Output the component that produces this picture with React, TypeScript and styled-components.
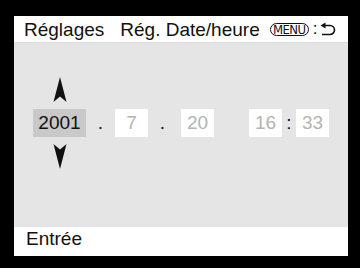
import React from 'react';
import styled, { createGlobalStyle } from 'styled-components';

const GlobalStyle = createGlobalStyle`
  html, body {
    margin: 0;
    padding: 0;
    background: #000;
  }
  body {
    font-family: "Liberation Sans", Arial, sans-serif;
  }
`;

const Frame = styled.div`
  width: 360px;
  height: 268px;
  background: #000;
  padding: 16px 12px 12px 14px;
  box-sizing: border-box;
`;

const Screen = styled.div`
  width: 334px;
  height: 240px;
  display: flex;
  flex-direction: column;
  background: #e5e5e5;
`;

const Header = styled.div`
  height: 27px;
  display: flex;
  align-items: center;
  padding-left: 10px;
  background: #fff;
  border-bottom: 1px solid #dcdcdc;
  box-sizing: border-box;
  font-size: 19px;
  line-height: 27px;
  color: #111;
  white-space: nowrap;
`;

const Title = styled.span<{ $gap: number }>`
  margin-right: ${(p) => p.$gap}px;
`;

const MenuBadge = styled.span`
  display: inline-flex;
  align-items: center;
  justify-content: center;
  width: 39px;
  height: 13px;
  border: 1px solid #111;
  border-radius: 7px;
  font-family: "DejaVu Sans Condensed", "Liberation Sans Narrow", sans-serif;
  font-size: 13px;
  line-height: 13px;
  letter-spacing: -0.6px;
  color: #111;
  box-sizing: border-box;
  padding-top: 1px;
`;

const Colon = styled.span`
  font-size: 17px;
  margin: 0 3px 2px 4px;
`;

const Body = styled.div`
  flex: 1;
  display: flex;
  align-items: center;
  padding: 0 0 24px 19px;
`;

const Column = styled.div`
  display: flex;
  flex-direction: column;
  align-items: center;
  gap: 7px;
`;

const Arrow = styled.svg`
  display: block;
  width: 14px;
  height: 25px;
`;

const Field = styled.div<{ $w: number; $active?: boolean }>`
  width: ${(p) => p.$w}px;
  height: 28px;
  display: flex;
  align-items: center;
  justify-content: center;
  background: ${(p) => (p.$active ? '#c9c9c9' : '#fff')};
  color: ${(p) => (p.$active ? '#111' : '#b3b3b3')};
  font-size: 19px;
`;

const Sep = styled.div<{ $w: number; $shift?: number }>`
  width: ${(p) => p.$w}px;
  text-align: center;
  font-size: 19px;
  color: #111;
  padding-right: ${(p) => p.$shift ?? 0}px;
  box-sizing: border-box;
`;

const Footer = styled.div`
  height: 29px;
  background: #fff;
  padding: 1px 0 0 12px;
  box-sizing: border-box;
  font-size: 19px;
  line-height: 21px;
  color: #111;
`;

const UpArrow = () => (
  <Arrow viewBox="0 0 14 25">
    <path d="M7 0 L13.5 25 L7 19.5 L0.5 25 Z" fill="#111" />
  </Arrow>
);

const DownArrow = () => (
  <Arrow viewBox="0 0 14 25">
    <path d="M7 25 L13.5 0 L7 5.5 L0.5 0 Z" fill="#111" />
  </Arrow>
);

const BackIcon = () => (
  <svg width="16" height="14" viewBox="0 0 16 14">
    <path d="M0.5 3.5 L5.5 0.5 L5.5 6.5 Z" fill="#111" />
    <path d="M5 3.5 H10 A4.5 4.5 0 0 1 10 12.5 H2" fill="none" stroke="#111" strokeWidth="1.6" />
  </svg>
);

export default function App() {
  return (
    <>
      <GlobalStyle />
      <Frame>
        <Screen>
          <Header>
            <Title $gap={16}>Réglages</Title>
            <Title $gap={10}>Rég. Date/heure</Title>
            <MenuBadge>MENU</MenuBadge>
            <Colon>:</Colon>
            <BackIcon />
          </Header>
          <Body>
            <Column>
              <UpArrow />
              <Field $w={53} $active>
                2001
              </Field>
              <DownArrow />
            </Column>
            <Sep $w={29}>.</Sep>
            <Field $w={33}>7</Field>
            <Sep $w={33} $shift={4}>.</Sep>
            <Field $w={33}>20</Field>
            <Sep $w={35} />
            <Field $w={33}>16</Field>
            <Sep $w={14}>:</Sep>
            <Field $w={33}>33</Field>
          </Body>
          <Footer>Entrée</Footer>
        </Screen>
      </Frame>
    </>
  );
}
